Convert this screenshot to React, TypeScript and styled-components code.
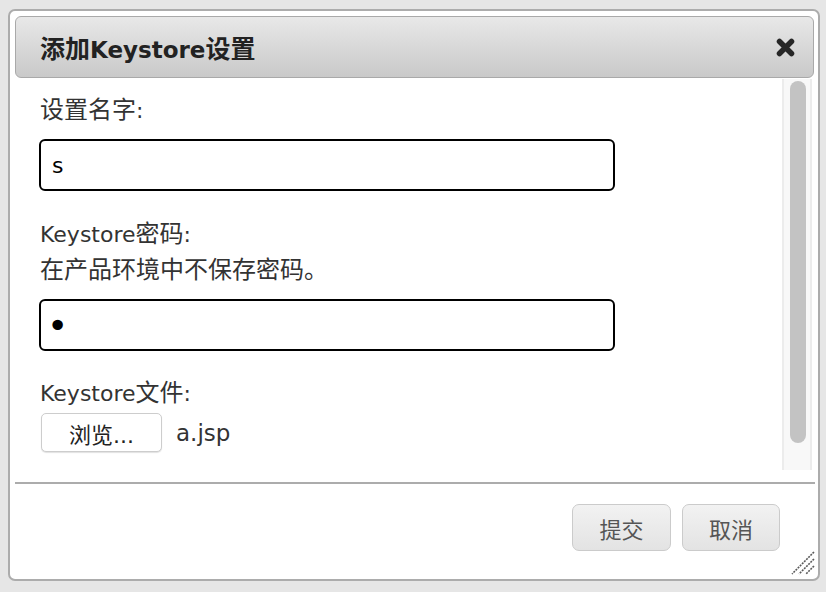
import React from "react";
import styled, { createGlobalStyle } from "styled-components";

const Global = createGlobalStyle`
  html, body { margin: 0; padding: 0; background: #e6e6e6; }
  body { font-family: "DejaVu Sans", "Noto Sans CJK SC", sans-serif; }
`;

const Page = styled.div`
  padding: 9px 0 0 8px;
  width: 826px;
  height: 592px;
  box-sizing: border-box;
`;

const Dialog = styled.div`
  position: relative;
  width: 812px;
  height: 572px;
  box-sizing: border-box;
  border: 2px solid #acacac;
  border-radius: 7px;
  background: #fff;
  padding: 5px 4px 0 5px;
  display: flex;
  flex-direction: column;
`;

const TitleBar = styled.div`
  height: 62px;
  box-sizing: border-box;
  border: 1px solid #a9a9a9;
  border-radius: 6px;
  background: linear-gradient(#e8e8e8, #c9c9c9);
  display: flex;
  align-items: center;
  justify-content: space-between;
  padding: 0 17px 0 24px;
  flex-shrink: 0;
`;

const Title = styled.span`
  font-weight: bold;
  font-size: 23px;
  color: #222;
`;

const Han = styled.span<{ $size?: number }>`
  font-size: ${(p) => p.$size ?? 24}px;
`;

const CloseButton = styled.button`
  border: 0;
  background: transparent;
  padding: 0;
  width: 21px;
  height: 21px;
  display: flex;
  cursor: pointer;
`;

const Content = styled.div`
  height: 391px;
  margin-top: 1px;
  margin-right: 2px;
  display: flex;
  flex-shrink: 0;
  overflow: hidden;
`;

const Form = styled.div`
  flex: 1;
  padding: 13px 0 0 25px;
  display: flex;
  flex-direction: column;
  align-items: flex-start;
`;

const ScrollTrack = styled.div`
  width: 30px;
  box-sizing: border-box;
  background: #f8f8f8;
  border-left: 2px solid #ececec;
  border-right: 2px solid #ececec;
  padding: 2px 4px 0 6px;
`;

const ScrollThumb = styled.div`
  height: 362px;
  border-radius: 8px;
  background: #c3c3c3;
`;

const Label = styled.div<{ $gap?: number }>`
  font-size: 22px;
  line-height: 36px;
  height: 36px;
  color: #333;
  margin-top: ${(p) => p.$gap ?? 0}px;
`;

const TextInput = styled.input`
  box-sizing: border-box;
  width: 576px;
  height: 52px;
  margin: 11px 0 0 -1px;
  border: 2px solid #000;
  border-radius: 6px;
  padding: 0 11px;
  font-family: "DejaVu Sans", "Noto Sans CJK SC", sans-serif;
  font-size: 22px;
  color: #000;
  background: #fff;
  outline: none;
`;

const PasswordInput = styled(TextInput)`
  font-size: 36px;
  padding: 0 0 0 6px;
`;

const FileRow = styled.div`
  display: flex;
  align-items: center;
  gap: 14px;
  margin-top: 2px;
`;

const BrowseButton = styled.button`
  box-sizing: border-box;
  width: 121px;
  height: 39px;
  margin-left: 1px;
  border: 1px solid #cdcdcd;
  border-radius: 5px;
  background: #fff;
  box-shadow: 0 1px 1px rgba(0,0,0,0.12);
  font-family: "DejaVu Sans", "Noto Sans CJK SC", sans-serif;
  font-size: 22px;
  color: #222;
  padding: 0;
`;

const FileName = styled.span`
  font-size: 23px;
  color: #333;
`;

const ButtonPane = styled.div`
  margin-top: 12px;
  margin-right: -1px;
  border-top: 2px solid #acacac;
  display: flex;
  justify-content: flex-end;
  gap: 11px;
  padding: 20px 35px 0 0;
`;

const ActionButton = styled.button<{ $w: number }>`
  box-sizing: border-box;
  width: ${(p) => p.$w}px;
  height: 47px;
  border: 1px solid #cbcbcb;
  border-radius: 7px;
  background: linear-gradient(#f2f2f2, #e3e3e3);
  font-family: "DejaVu Sans", "Noto Sans CJK SC", sans-serif;
  font-size: 22px;
  color: #555;
  padding: 0;
`;

const Grip = styled.div`
  position: absolute;
  right: 3px;
  bottom: 4px;
  width: 24px;
  height: 24px;
  display: flex;
`;

const CJK = /([\u3000-\u9fff\uff00-\uffef]+)/;

function T({ text, size }: { text: string; size?: number }) {
  return (
    <>
      {text.split(CJK).map((part, i) =>
        CJK.test(part) ? (
          <Han key={i} $size={size}>
            {part}
          </Han>
        ) : (
          <React.Fragment key={i}>{part}</React.Fragment>
        )
      )}
    </>
  );
}

export default function App() {
  return (
    <Page>
      <Global />
      <Dialog>
        <TitleBar>
          <Title>
            <T text="添加Keystore设置" size={25} />
          </Title>
          <CloseButton aria-label="close">
            <svg width="21" height="21" viewBox="0 0 21 21">
              <path d="M4.5 4.5 L16.5 16.5 M16.5 4.5 L4.5 16.5" stroke="#262626" strokeWidth="5.5" strokeLinecap="round" />
            </svg>
          </CloseButton>
        </TitleBar>
        <Content>
          <Form>
            <Label>
              <T text="设置名字:" />
            </Label>
            <TextInput defaultValue="s" />
            <Label $gap={25}>
              <T text="Keystore密码:" />
            </Label>
            <Label>
              <T text="在产品环境中不保存密码。" />
            </Label>
            <PasswordInput type="password" defaultValue="a" />
            <Label $gap={24}>
              <T text="Keystore文件:" />
            </Label>
            <FileRow>
              <BrowseButton>浏览...</BrowseButton>
              <FileName>a.jsp</FileName>
            </FileRow>
          </Form>
          <ScrollTrack>
            <ScrollThumb />
          </ScrollTrack>
        </Content>
        <ButtonPane>
          <ActionButton $w={99}>提交</ActionButton>
          <ActionButton $w={98}>取消</ActionButton>
        </ButtonPane>
        <Grip>
          <svg width="24" height="24" viewBox="0 0 24 24">
            <path d="M23 1 L1 23 M23 8 L8 23 M23 15 L15 23" stroke="#5a5a5a" strokeWidth="1.6" strokeDasharray="2 1" />
          </svg>
        </Grip>
      </Dialog>
    </Page>
  );
}
